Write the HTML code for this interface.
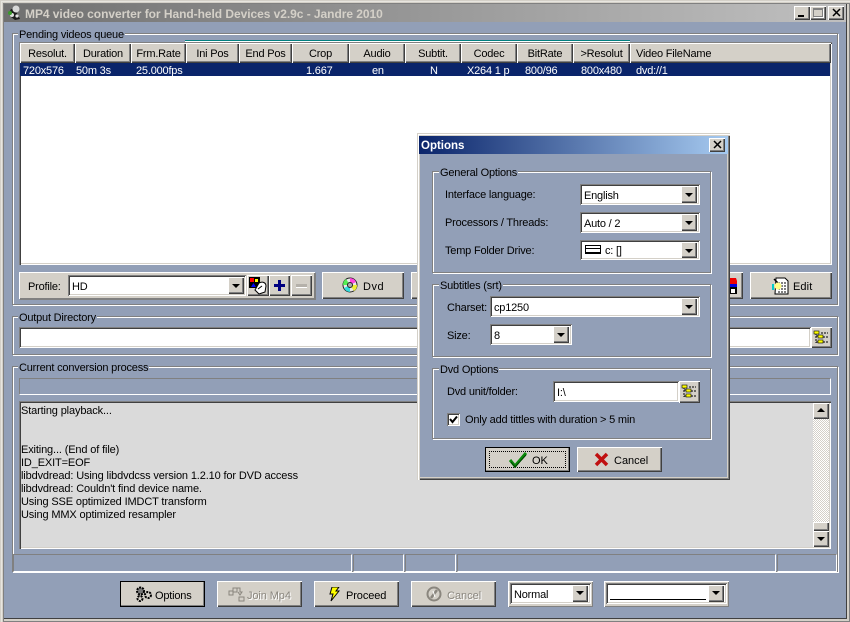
<!DOCTYPE html>
<html><head><meta charset="utf-8">
<style>
html,body{margin:0;padding:0;background:#929fb7}
#w{position:relative;width:850px;height:622px;overflow:hidden;background:#929fb7;font:11px/14px "Liberation Sans",Arial,sans-serif;letter-spacing:-.2px;color:#000}
#w div,#w span,#w svg{position:absolute;box-sizing:border-box}
#w span{white-space:nowrap;margin-top:1px}
.g{border:1px solid #808080;box-shadow:1px 1px 0 #fff,inset 1px 1px 0 #fff}
.l{background:#929fb7;padding:0 1px;height:14px}
.r{background:#d4d0c8;box-shadow:inset 1px 1px 0 #fff,inset -1px -1px 0 #404040,inset -2px -2px 0 #808080}
.s{background:#fff;box-shadow:inset 1px 1px 0 #808080,inset -1px -1px 0 #fff,inset 2px 2px 0 #404040,inset -2px -2px 0 #d4d0c8}
.h{background:#d4d0c8;box-shadow:inset 1px 1px 0 #fff,inset -1px -1px 0 #404040,inset -2px -2px 0 #808080;height:20px;top:43px;text-align:center;line-height:22px}
.dis{color:#8a867e;text-shadow:1px 1px 0 #fff}
.ar{width:0;height:0;border:4px solid transparent;border-top:4px solid #000;border-bottom:0}
.c{text-align:left}
.m{letter-spacing:-.14px}
</style></head><body><div id="w">

<!-- window frame -->
<div style="left:0;top:0;width:850px;height:622px;box-shadow:inset 1px 1px 0 #d4d0c8,inset 2px 2px 0 #e8e6e0,inset 3px 3px 0 #d4d0c8,inset 4px 4px 0 #808080,inset -1px -1px 0 #808080,inset -3px -3px 0 #d4d0c8,inset -4px -4px 0 #404040"></div>
<div style="left:4px;top:4px;width:842px;height:18px;background:linear-gradient(90deg,#707070,#c0c0c0)"></div>
<svg style="left:5px;top:4px" width="18" height="18" viewBox="0 0 18 18"><path d="M6 5l4 1 3 5 2 4-5 1-4-3-2-4z" fill="#1c1c1c"/><circle cx="11" cy="5" r="3.500" fill="#d8d8d8"/><circle cx="7" cy="11" r="2" fill="#e0e0e0"/><circle cx="12" cy="12" r="1.600" fill="#e0e0e0"/><circle cx="5" cy="9" r="2" fill="#3a9a2a"/></svg>
<span style="left:25px;top:5px;font-weight:bold;font-size:12px;letter-spacing:-.05px;line-height:16px;color:#d4d0c8">MP4 video converter for Hand-held Devices v2.9c - Jandre 2010</span>
<div class="r" style="left:794px;top:6px;width:16px;height:14px"></div>
<div style="left:798px;top:15px;width:6px;height:2px;background:#000"></div>
<div class="r" style="left:810px;top:6px;width:16px;height:14px"></div>
<div style="left:813px;top:8px;width:10px;height:9px;border:1px solid #808080;border-top-width:2px;box-shadow:1px 1px 0 #fff"></div>
<div class="r" style="left:828px;top:6px;width:16px;height:14px"></div>
<svg style="left:832px;top:8px" width="9" height="9" viewBox="0 0 9 9"><path d="M1 1l7 7M8 1L1 8" stroke="#000" stroke-width="1.500"/></svg>

<!-- Pending group -->
<div class="g" style="left:12px;top:33px;width:826px;height:272px"></div>
<span class="l" style="left:18px;top:27px">Pending videos queue</span>
<div style="left:185px;top:40px;width:445px;height:3px;background:#fff;border-top:1px solid #008080;border-bottom:1px solid #008080"></div>
<div style="left:19px;top:42px;width:813px;height:223px;background:#fff;box-shadow:inset 1px 1px 0 #808080,inset 2px 2px 0 #404040,inset -1px -1px 0 #fff,inset -2px -2px 0 #d4d0c8"></div>
<div class="h" style="left:20px;width:55px">Resolut.</div>
<div class="h" style="left:75px;width:56px">Duration</div>
<div class="h" style="left:131px;width:55px">Frm.Rate</div>
<div class="h" style="left:186px;width:53px">Ini Pos</div>
<div class="h" style="left:239px;width:53px">End Pos</div>
<div class="h" style="left:292px;width:57px">Crop</div>
<div class="h" style="left:349px;width:56px">Audio</div>
<div class="h" style="left:405px;width:56px">Subtit.</div>
<div class="h" style="left:461px;width:56px">Codec</div>
<div class="h" style="left:517px;width:56px">BitRate</div>
<div class="h" style="left:573px;width:57px">&gt;Resolut</div>
<div class="h c" style="left:630px;width:201px;padding-left:6px">Video FileName</div>
<div style="left:20px;top:63px;width:810px;height:13px;background:#0a246a"></div>
<span style="left:23px;top:63px;color:#fff">720x576</span>
<span style="left:76px;top:63px;color:#fff">50m 3s</span>
<span style="left:136px;top:63px;color:#fff">25.000fps</span>
<span style="left:306px;top:63px;color:#fff">1.667</span>
<span style="left:372px;top:63px;color:#fff">en</span>
<span style="left:430px;top:63px;color:#fff">N</span>
<span style="left:467px;top:63px;color:#fff">X264 1 p</span>
<span style="left:525px;top:63px;color:#fff">800/96</span>
<span style="left:581px;top:63px;color:#fff">800x480</span>
<span style="left:636px;top:63px;color:#fff">dvd://1</span>

<!-- profile -->
<div style="left:19px;top:272px;width:296px;height:27px;background:#d4d0c8;box-shadow:inset 1px 1px 0 #fff,inset -1px -1px 0 #808080,1px 1px 0 #808080"></div>
<span style="left:28px;top:279px">Profile:</span>
<div class="s" style="left:68px;top:275px;width:178px;height:21px"></div>
<span style="left:72px;top:279px">HD</span>
<div class="r" style="left:228px;top:277px;width:16px;height:17px"></div>
<div class="ar" style="left:232px;top:284px"></div>
<div class="r" style="left:247px;top:275px;width:22px;height:21px"></div>
<svg style="left:249px;top:277px" width="18" height="18" viewBox="0 0 18 18"><rect x="0" y="0" width="11" height="11" fill="#000"/><rect x="1" y="1" width="4" height="4" fill="#f00"/><path d="M2 10l2.500-4 2.500 4z" fill="#00f"/><rect x="6" y="2" width="3" height="3" fill="#ff0"/><path d="M10 6c4-2 7 0 7 3l-1 6-6 2-4-4z" fill="#fff" stroke="#000"/><path d="M9 12l4-3" stroke="#000"/></svg>
<div class="r" style="left:269px;top:275px;width:21px;height:21px"></div>
<div style="left:274px;top:284px;width:11px;height:3px;background:#000080"></div>
<div style="left:278px;top:280px;width:3px;height:11px;background:#000080"></div>
<div class="r" style="left:291px;top:275px;width:21px;height:21px"></div>
<div style="left:296px;top:284px;width:11px;height:3px;background:#b5b1aa;box-shadow:0 1px 0 #fff"></div>
<div class="r" style="left:322px;top:272px;width:82px;height:27px"></div>
<svg style="left:342px;top:277px" width="16" height="16" viewBox="0 0 16 16"><circle cx="8" cy="8" r="7" fill="#e8e8e8" stroke="#222"/><path d="M8 1a7 7 0 0 1 6 4L8 8z" fill="#f4d" /><path d="M15 8a7 7 0 0 1-3 6L8 8z" fill="#ee3"/><path d="M8 15a7 7 0 0 1-6-4l6-3z" fill="#3dd"/><path d="M1 8a7 7 0 0 1 3-6l4 6z" fill="#5e5"/><circle cx="8" cy="8" r="2.500" fill="#aaa" stroke="#222"/></svg>
<span style="left:363px;top:279px;letter-spacing:.5px">Dvd</span>
<div class="r" style="left:411px;top:272px;width:20px;height:27px"></div>
<div class="r" style="left:700px;top:272px;width:43px;height:27px"></div>
<svg style="left:729px;top:278px" width="9" height="16" viewBox="0 0 9 16"><path d="M0 0h7l1 3v3H0z" fill="#e00"/><rect x="0" y="6" width="8" height="3" fill="#00d"/><path d="M0 9h8v7H0z" fill="#000"/><rect x="2" y="11" width="4" height="4" fill="#fff"/></svg>
<div class="r" style="left:750px;top:272px;width:82px;height:27px"></div>
<svg style="left:771px;top:277px" width="18" height="18" viewBox="0 0 18 18"><path d="M5 1h9l3 3v13H4z" fill="#fff" stroke="#000"/><path d="M7 6h8M7 9h8M7 12h8M7 15h8" stroke="#000" stroke-dasharray="2 1"/><rect x="1" y="7" width="2" height="6" fill="#0cc"/><path d="M3 2l6 6" stroke="#000" stroke-width="1.500"/><circle cx="7" cy="9" r="3.500" fill="#ff8"/></svg>
<span style="left:793px;top:279px;letter-spacing:.1px">Edit</span>

<!-- Output Directory -->
<div class="g" style="left:12px;top:316px;width:826px;height:39px"></div>
<span class="l" style="left:18px;top:310px">Output Directory</span>
<div class="s" style="left:19px;top:327px;width:792px;height:21px"></div>
<div class="r" style="left:811px;top:327px;width:21px;height:21px"></div>
<svg style="left:813px;top:330px" width="17" height="15" viewBox="0 0 17 15"><path d="M3 3v10M3 6h3M3 12h3M8 3h7M10 7h6M10 12h6" stroke="#000" stroke-dasharray="2 1" fill="none"/><rect x="1" y="1" width="5" height="3" fill="#ff0" stroke="#000" stroke-width=".6"/><rect x="5" y="5" width="5" height="3" fill="#ff0" stroke="#000" stroke-width=".6"/><rect x="5" y="10" width="5" height="3" fill="#ff0" stroke="#000" stroke-width=".6"/></svg>

<!-- Current -->
<div class="g" style="left:12px;top:366px;width:826px;height:206px"></div>
<span class="l" style="left:18px;top:360px">Current conversion process</span>
<div style="left:19px;top:378px;width:812px;height:17px;border:1px solid #808080;border-right-color:#fff;border-bottom-color:#fff"></div>
<div style="left:19px;top:401px;width:812px;height:148px;background:#dadada;box-shadow:inset 1px 1px 0 #808080,inset 2px 2px 0 #404040,inset -1px -1px 0 #fff,inset -2px -2px 0 #d4d0c8"></div>
<span class="m" style="left:21px;top:403px">Starting playback...</span>
<span class="m" style="left:21px;top:442px">Exiting... (End of file)</span>
<span class="m" style="left:21px;top:455px">ID_EXIT=EOF</span>
<span class="m" style="left:21px;top:468px">libdvdread: Using libdvdcss version 1.2.10 for DVD access</span>
<span class="m" style="left:21px;top:481px">libdvdread: Couldn't find device name.</span>
<span class="m" style="left:21px;top:494px">Using SSE optimized IMDCT transform</span>
<span class="m" style="left:21px;top:507px">Using MMX optimized resampler</span>
<div style="left:813px;top:403px;width:16px;height:144px;background:repeating-conic-gradient(#fff 0 25%,#d4d0c8 0 50%) 0 0/2px 2px"></div>
<div class="r" style="left:813px;top:403px;width:16px;height:16px"></div>
<div style="left:817px;top:408px;width:0;height:0;border:4px solid transparent;border-bottom:4px solid #000;border-top:0"></div>
<div class="r" style="left:813px;top:522px;width:16px;height:9px"></div>
<div class="r" style="left:813px;top:531px;width:16px;height:16px"></div>
<div class="ar" style="left:817px;top:537px"></div>

<!-- status -->
<div style="left:13px;top:554px;width:339px;height:18px;border:1px solid #808080;border-right-color:#fff;border-bottom-color:#fff"></div>
<div style="left:353px;top:554px;width:51px;height:18px;border:1px solid #808080;border-right-color:#fff;border-bottom-color:#fff"></div>
<div style="left:405px;top:554px;width:51px;height:18px;border:1px solid #808080;border-right-color:#fff;border-bottom-color:#fff"></div>
<div style="left:457px;top:554px;width:319px;height:18px;border:1px solid #808080;border-right-color:#fff;border-bottom-color:#fff"></div>
<div style="left:777px;top:554px;width:60px;height:18px;border:1px solid #808080;border-right-color:#fff;border-bottom-color:#fff"></div>

<!-- bottom buttons -->
<div class="r" style="left:120px;top:581px;width:85px;height:26px;outline:1px solid #000;outline-offset:-1px"></div>
<svg style="left:135px;top:586px" width="17" height="16" viewBox="0 0 17 16"><circle cx="5.500" cy="5" r="3.500" fill="#777" stroke="#000" stroke-width="2" stroke-dasharray="2 1"/><circle cx="13" cy="9" r="3" fill="none" stroke="#000" stroke-width="2" stroke-dasharray="2 1"/><circle cx="5" cy="12.500" r="2.500" fill="none" stroke="#000" stroke-width="2" stroke-dasharray="2 1"/></svg>
<span style="left:155px;top:588px;letter-spacing:-.2px">Options</span>
<div class="r" style="left:217px;top:581px;width:85px;height:26px"></div>
<svg style="left:228px;top:586px" width="17" height="16" viewBox="0 0 17 16"><path d="M1 5h4v4H1zM5 2h4v4H5zM9 2h3v4l2 0-2 3-2-3M11 11h5v4h-5z" fill="none" stroke="#8a867e"/></svg>
<span class="dis" style="left:247px;top:588px;letter-spacing:-.1px">Join Mp4</span>
<div class="r" style="left:314px;top:581px;width:85px;height:26px"></div>
<svg style="left:329px;top:587px" width="11" height="15" viewBox="0 0 11 15"><path d="M3 0h7L7 4h3L2 14l2-7H1z" fill="#ff0" stroke="#000"/></svg>
<span style="left:346px;top:588px;letter-spacing:-.1px">Proceed</span>
<div class="r" style="left:411px;top:581px;width:85px;height:26px"></div>
<svg style="left:426px;top:586px" width="17" height="16" viewBox="0 0 17 16"><circle cx="8" cy="8" r="6.500" fill="none" stroke="#8a867e" stroke-width="2"/><path d="M5 12l6-8" stroke="#8a867e" stroke-width="2.500"/><path d="M7 5l2 6" stroke="#fff"/></svg>
<span class="dis" style="left:447px;top:588px;letter-spacing:0">Cancel</span>

<div style="left:508px;top:581px;width:85px;height:26px;background:#d4d0c8;box-shadow:inset 1px 1px 0 #fff,inset -1px -1px 0 #808080"></div>
<div class="s" style="left:510px;top:583px;width:81px;height:21px"></div>
<span style="left:514px;top:587px">Normal</span>
<div class="r" style="left:572px;top:585px;width:16px;height:17px"></div>
<div class="ar" style="left:576px;top:591px"></div>
<div style="left:604px;top:581px;width:125px;height:26px;background:#d4d0c8;box-shadow:inset 1px 1px 0 #fff,inset -1px -1px 0 #808080"></div>
<div class="s" style="left:606px;top:583px;width:121px;height:21px"></div>
<div style="left:610px;top:599px;width:96px;height:1px;background:#000"></div>
<div class="r" style="left:708px;top:585px;width:16px;height:17px"></div>
<div class="ar" style="left:712px;top:591px"></div>

<!-- Dialog -->
<div style="left:417px;top:133px;width:313px;height:347px;background:#929fb7;box-shadow:inset 1px 1px 0 #d4d0c8,inset 2px 2px 0 #fff,inset 3px 3px 0 #d4d0c8,inset -1px -1px 0 #404040,inset -2px -2px 0 #808080,inset -3px -3px 0 #d4d0c8"></div>
<div style="left:419px;top:136px;width:309px;height:18px;background:linear-gradient(90deg,#0a246a,#a6caf0)"></div>
<span style="left:421px;top:137px;font-weight:bold;font-size:11.500px;letter-spacing:0;line-height:16px;color:#fff">Options</span>
<div class="r" style="left:709px;top:138px;width:16px;height:14px"></div>
<svg style="left:713px;top:140px" width="9" height="9" viewBox="0 0 9 9"><path d="M1 1l7 7M8 1L1 8" stroke="#000" stroke-width="1.500"/></svg>

<div class="g" style="left:432px;top:171px;width:279px;height:102px"></div>
<span class="l" style="left:439px;top:165px">General Options</span>
<span style="left:445px;top:187px">Interface language:</span>
<span style="left:445px;top:215px">Processors / Threads:</span>
<span style="left:445px;top:243px">Temp Folder Drive:</span>
<div class="s" style="left:580px;top:184px;width:120px;height:21px"></div>
<span style="left:584px;top:188px">English</span>
<div class="r" style="left:681px;top:186px;width:16px;height:17px"></div><div class="ar" style="left:685px;top:193px"></div>
<div class="s" style="left:580px;top:212px;width:120px;height:21px"></div>
<span style="left:584px;top:216px">Auto / 2</span>
<div class="r" style="left:681px;top:214px;width:16px;height:17px"></div><div class="ar" style="left:685px;top:221px"></div>
<div class="s" style="left:580px;top:240px;width:120px;height:20px"></div>
<div style="left:585px;top:245px;width:16px;height:9px;border:1px solid #000;border-width:1px 1px 2px 1px;background:linear-gradient(#fff 0 2px,#000 2px 3px,#fff 3px)"></div>
<span style="left:605px;top:243px">c: []</span>
<div class="r" style="left:681px;top:242px;width:16px;height:16px"></div><div class="ar" style="left:685px;top:249px"></div>

<div class="g" style="left:432px;top:284px;width:279px;height:73px"></div>
<span class="l" style="left:439px;top:278px">Subtitles (srt)</span>
<span style="left:447px;top:300px">Charset:</span>
<span style="left:447px;top:328px">Size:</span>
<div class="s" style="left:490px;top:296px;width:210px;height:21px"></div>
<span style="left:494px;top:300px">cp1250</span>
<div class="r" style="left:681px;top:298px;width:16px;height:17px"></div><div class="ar" style="left:685px;top:305px"></div>
<div class="s" style="left:490px;top:324px;width:82px;height:21px"></div>
<span style="left:494px;top:328px">8</span>
<div class="r" style="left:553px;top:326px;width:16px;height:17px"></div><div class="ar" style="left:557px;top:333px"></div>

<div class="g" style="left:432px;top:368px;width:279px;height:71px"></div>
<span class="l" style="left:439px;top:362px">Dvd Options</span>
<span style="left:447px;top:384px">Dvd unit/folder:</span>
<div class="s" style="left:553px;top:381px;width:126px;height:21px"></div>
<span style="left:557px;top:385px">I:\</span>
<div class="r" style="left:679px;top:381px;width:21px;height:22px"></div>
<svg style="left:681px;top:384px" width="17" height="15" viewBox="0 0 17 15"><path d="M3 3v10M3 6h3M3 12h3M8 3h7M10 7h6M10 12h6" stroke="#000" stroke-dasharray="2 1" fill="none"/><rect x="1" y="1" width="5" height="3" fill="#ff0" stroke="#000" stroke-width=".6"/><rect x="5" y="5" width="5" height="3" fill="#ff0" stroke="#000" stroke-width=".6"/><rect x="5" y="10" width="5" height="3" fill="#ff0" stroke="#000" stroke-width=".6"/></svg>
<div class="s" style="left:447px;top:413px;width:13px;height:13px"></div>
<svg style="left:449px;top:415px" width="9" height="9" viewBox="0 0 9 9"><path d="M1 4l2.500 3L8 1.500" fill="none" stroke="#000" stroke-width="2"/></svg>
<span style="left:465px;top:412px">Only add tittles with duration &gt; 5 min</span>

<div class="r" style="left:485px;top:447px;width:85px;height:25px;outline:1px solid #000;outline-offset:-1px"></div>
<div style="left:489px;top:451px;width:77px;height:17px;border:1px dotted #000"></div>
<svg style="left:509px;top:451px" width="18" height="17" viewBox="0 0 18 17"><path d="M1 9l5 6L17 2" fill="none" stroke="#0a8a0a" stroke-width="3"/><path d="M2 11l4 5L17 4" fill="none" stroke="#004000" stroke-width="1"/></svg>
<span style="left:532px;top:453px;letter-spacing:0">OK</span>
<div class="r" style="left:577px;top:447px;width:85px;height:25px"></div>
<svg style="left:594px;top:452px" width="15" height="15" viewBox="0 0 15 15"><path d="M2 2l11 11M13 2L2 13" stroke="#c01010" stroke-width="3.500"/></svg>
<span style="left:614px;top:453px;letter-spacing:0">Cancel</span>

</div></body></html>
